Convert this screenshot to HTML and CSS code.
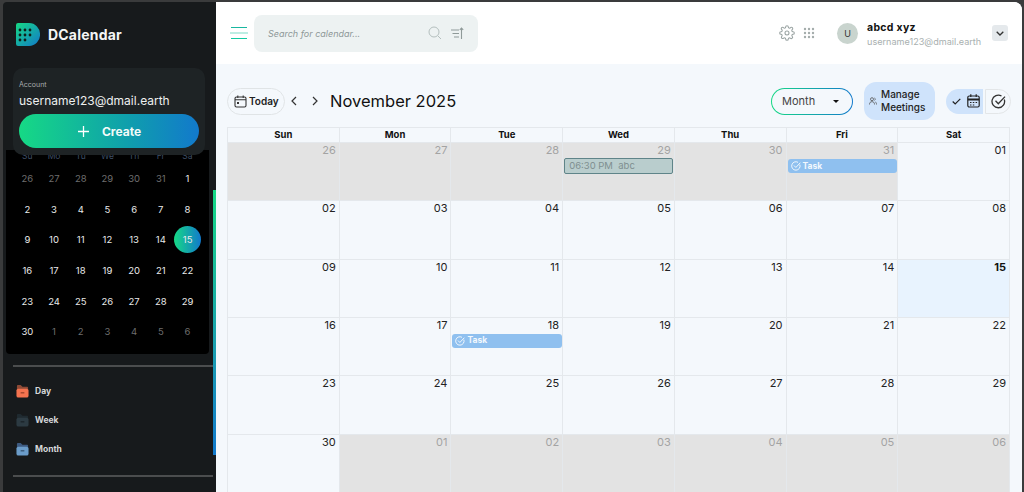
FILE: index.html
```html
<!DOCTYPE html>
<html lang="en">
<head>
<meta charset="utf-8">
<title>DCalendar</title>
<link rel="stylesheet" href="styles.css">
</head>
<body>
<div class="app">
  <aside class="sidebar">
    <div class="brand">
      <svg class="logo" width="24" height="23" viewBox="0 0 24 23">
        <defs><linearGradient id="lg" x1="0" y1="0" x2="1" y2="1"><stop offset="0" stop-color="#16d985"/><stop offset="1" stop-color="#1279c9"/></linearGradient></defs>
        <path d="M0 2a2 2 0 0 1 2-2h11a11 11 0 0 1 11 11.500a11 11 0 0 1-11 11.500H2a2 2 0 0 1-2-2z" fill="url(#lg)"/>
        <g fill="#10201c"><circle cx="4" cy="7" r="1.400"/><circle cx="9" cy="7" r="1.400"/><circle cx="14" cy="7" r="1.400"/><circle cx="4" cy="12" r="1.400"/><circle cx="9" cy="12" r="1.400"/><circle cx="14" cy="12" r="1.400"/><circle cx="4" cy="17" r="1.400"/><circle cx="9" cy="17" r="1.400"/></g>
      </svg>
      <span class="brand-name">DCalendar</span>
    </div>
    <div class="account">
      <div class="account-label">Account</div>
      <div class="account-mail">username123@dmail.earth</div>
      <button class="create"><svg width="13" height="13" viewBox="0 0 13 13"><path d="M6.500 1v11M1 6.500h11" stroke="#fff" stroke-width="1.300"/></svg><span>Create</span></button>
    </div>
    <div class="mini">
      <div class="mini-head"><span>Su</span><span>Mo</span><span>Tu</span><span>We</span><span>Th</span><span>Fr</span><span>Sa</span></div>
      <div class="mini-grid">
        <span class="dim">26</span><span class="dim">27</span><span class="dim">28</span><span class="dim">29</span><span class="dim">30</span><span class="dim">31</span><span>1</span>
        <span>2</span><span>3</span><span>4</span><span>5</span><span>6</span><span>7</span><span>8</span>
        <span>9</span><span>10</span><span>11</span><span>12</span><span>13</span><span>14</span><span class="now">15</span>
        <span>16</span><span>17</span><span>18</span><span>19</span><span>20</span><span>21</span><span>22</span>
        <span>23</span><span>24</span><span>25</span><span>26</span><span>27</span><span>28</span><span>29</span>
        <span>30</span><span class="dim">1</span><span class="dim">2</span><span class="dim">3</span><span class="dim">4</span><span class="dim">5</span><span class="dim">6</span>
      </div>
    </div>
    <nav class="views">
      <div class="view"><svg width="13" height="14" viewBox="0 0 14 15"><path d="M1 6V2a1 1 0 0 1 1-1h3l2 2h5a1 1 0 0 1 1 1v2z" fill="#8d4a36"/><rect x="0.500" y="5" width="13" height="9.500" rx="2" fill="#f4734f"/><rect x="5" y="9" width="4" height="1" fill="#7c2f1c"/></svg><span>Day</span></div>
      <div class="view"><svg width="13" height="14" viewBox="0 0 14 15"><path d="M1 6V2a1 1 0 0 1 1-1h3l2 2h5a1 1 0 0 1 1 1v2z" fill="#1f2a30"/><rect x="0.500" y="5" width="13" height="9.500" rx="2" fill="#2c3a42"/><rect x="5" y="9" width="4" height="1" fill="#151b1f"/></svg><span>Week</span></div>
      <div class="view"><svg width="13" height="14" viewBox="0 0 14 15"><path d="M1 6V2a1 1 0 0 1 1-1h3l2 2h5a1 1 0 0 1 1 1v2z" fill="#3d5a80"/><rect x="0.500" y="5" width="13" height="9.500" rx="2" fill="#6b9cc9"/><rect x="5" y="9" width="4" height="1" fill="#22384f"/></svg><span>Month</span></div>
    </nav>
    <div class="thumb"></div>
  </aside>
  <main class="main">
    <header class="topbar">
      <svg class="menu" width="18" height="15" viewBox="0 0 18 15"><g stroke-width="1.200"><path d="M1 1.500h16" stroke="#19b7a0"/><path d="M0 7h18" stroke="#7fdcc8"/><path d="M1 12.500h16" stroke="#12c9a0"/></g></svg>
      <div class="search">
        <span class="search-text">Search for calendar...</span>
        <svg width="14" height="14" viewBox="0 0 14 14" fill="none" stroke="#b4bfbe" stroke-width="1"><circle cx="6" cy="6" r="5"/><path d="M10 10l3 3"/></svg>
        <svg width="13" height="13" viewBox="0 0 13 13" fill="none" stroke="#8f9a99" stroke-width="1.100"><path d="M0 3h8M1.500 6.500h6.500M3 10h5M10.500 12V1M8.800 2.800l1.700-1.800 1.700 1.800"/></svg>
      </div>
      <div class="spacer"></div>
      <svg class="gear" width="16" height="16" viewBox="0 0 24 24" fill="none" stroke="#9aa4a3" stroke-width="1.600" stroke-linejoin="round"><circle cx="12" cy="12" r="3"/><path d="M19.400 15a1.700 1.700 0 0 0 .3 1.800l.1.100a2 2 0 1 1-2.900 2.900l-.1-.1a1.700 1.700 0 0 0-2.800 1.200V21a2 2 0 1 1-4 0v-.1a1.700 1.700 0 0 0-2.900-1.200l-.1.100a2 2 0 1 1-2.800-2.900l.1-.1a1.700 1.700 0 0 0-1.200-2.800H3a2 2 0 1 1 0-4h.1a1.700 1.700 0 0 0 1.200-2.900l-.1-.1A2 2 0 1 1 7 4.200l.1.100a1.700 1.700 0 0 0 1.800.3H9a1.700 1.700 0 0 0 1-1.500V3a2 2 0 1 1 4 0v.1a1.700 1.700 0 0 0 2.900 1.200l.1-.1a2 2 0 1 1 2.800 2.800l-.1.100a1.700 1.700 0 0 0 1.200 2.900H21a2 2 0 1 1 0 4h-.1a1.700 1.700 0 0 0-1.500 1z"/></svg>
      <svg class="apps" width="12" height="12" viewBox="0 0 12 12" fill="#a4adac"><circle cx="2" cy="2" r="1.200"/><circle cx="6" cy="2" r="1.200"/><circle cx="10" cy="2" r="1.200"/><circle cx="2" cy="6" r="1.200"/><circle cx="6" cy="6" r="1.200"/><circle cx="10" cy="6" r="1.200"/><circle cx="2" cy="10" r="1.200"/><circle cx="6" cy="10" r="1.200"/><circle cx="10" cy="10" r="1.200"/></svg>
      <div class="avatar">U</div>
      <div class="user">
        <div class="user-name">abcd xyz</div>
        <div class="user-mail">username123@dmail.earth</div>
      </div>
      <div class="user-more"><svg width="8" height="5" viewBox="0 0 8 5" fill="none" stroke="#333" stroke-width="1.300"><path d="M.7.700L4 4 7.300.700"/></svg></div>
    </header>
    <section class="content">
      <div class="toolbar">
        <button class="today">
          <svg width="13" height="13" viewBox="0 0 13 13" fill="none" stroke="#333" stroke-width="1.100"><rect x="1" y="2" width="11" height="10" rx="1.500"/><path d="M1 4.800h11M3.800.500v2.500M9.200.500v2.500"/><rect x="3" y="7" width="2" height="2" fill="#333" stroke="none"/></svg>
          <span>Today</span>
        </button>
        <svg class="nav-first" width="6" height="10" viewBox="0 0 6 10" fill="none" stroke="#333" stroke-width="1.200"><path d="M5 1L1 5l4 4"/></svg>
        <svg class="nav-next" width="6" height="10" viewBox="0 0 6 10" fill="none" stroke="#333" stroke-width="1.200"><path d="M1 1l4 4-4 4"/></svg>
        <h1 class="title">November 2025</h1>
        <div class="spacer"></div>
        <div class="month-ring"><div class="month-select"><span>Month</span><i class="caret"></i></div></div>
        <button class="manage">
          <svg width="8" height="8" viewBox="0 0 8 8" fill="none" stroke="#555" stroke-width=".8"><circle cx="3" cy="2.200" r="1.500"/><path d="M.5 7.500c0-2 1-2.800 2.500-2.800s2.500.8 2.500 2.800M5.500 1c1 .3 1 2 0 2.400M6.300 4.900c.8.400 1.200 1.200 1.200 2.600"/></svg>
          <span>Manage<br>Meetings</span>
        </button>
        <div class="toggle">
          <div class="toggle-on">
            <svg width="9" height="7" viewBox="0 0 9 7" fill="none" stroke="#222" stroke-width="1.200"><path d="M.7 3.500L3.200 6 8.300.8"/></svg>
            <svg width="13" height="14" viewBox="0 0 13 14" fill="none" stroke="#222" stroke-width="1.200"><rect x=".8" y="2" width="11.400" height="11" rx="1.500"/><path d="M.8 5.500h11.400" stroke-width="2"/><path d="M3.800.3V3M9.200.3V3"/><path d="M3 8.500h1.500M5.800 8.500h1.500M8.600 8.500h1.500M3 11h1.500M5.800 11h1.500" stroke-width="1"/></svg>
          </div>
          <div class="toggle-off"><svg width="15" height="15" viewBox="0 0 15 15" fill="none" stroke="#333" stroke-width="1.300"><path d="M13.300 5.500A6.300 6.300 0 1 1 10.500 2"/><path d="M4.500 6.800l2.800 2.900L14 2.600"/></svg></div>
        </div>
      </div>
      <div class="calendar">
        <div class="dow">Sun</div><div class="dow">Mon</div><div class="dow">Tue</div><div class="dow">Wed</div><div class="dow">Thu</div><div class="dow">Fri</div><div class="dow">Sat</div>

        <div class="day off">26</div><div class="day off">27</div><div class="day off">28</div>
        <div class="day off">29<div class="event">06:30 PM&nbsp; abc</div></div>
        <div class="day off">30</div>
        <div class="day off">31<div class="task"><svg width="10" height="10" viewBox="0 0 15 15" fill="none" stroke="#fff" stroke-width="1.300"><path d="M13.300 5.500A6.300 6.300 0 1 1 10.500 2"/><path d="M4.500 6.800l2.800 2.900L14 2.600"/></svg><span>Task</span></div></div>
        <div class="day">01</div>

        <div class="day">02</div><div class="day">03</div><div class="day">04</div><div class="day">05</div><div class="day">06</div><div class="day">07</div><div class="day">08</div>

        <div class="day">09</div><div class="day">10</div><div class="day">11</div><div class="day">12</div><div class="day">13</div><div class="day">14</div><div class="day today-cell">15</div>

        <div class="day">16</div><div class="day">17</div>
        <div class="day">18<div class="task"><svg width="10" height="10" viewBox="0 0 15 15" fill="none" stroke="#fff" stroke-width="1.300"><path d="M13.300 5.500A6.300 6.300 0 1 1 10.500 2"/><path d="M4.500 6.800l2.800 2.900L14 2.600"/></svg><span>Task</span></div></div>
        <div class="day">19</div><div class="day">20</div><div class="day">21</div><div class="day">22</div>

        <div class="day">23</div><div class="day">24</div><div class="day">25</div><div class="day">26</div><div class="day">27</div><div class="day">28</div><div class="day">29</div>

        <div class="day">30</div><div class="day off">01</div><div class="day off">02</div><div class="day off">03</div><div class="day off">04</div><div class="day off">05</div><div class="day off">06</div>
      </div>
    </section>
  </main>
</div>
</body>
</html>
```

FILE: styles.css
```css
* { box-sizing: border-box; }
html, body { margin: 0; height: 100%; overflow: hidden; }
body {
  background: #3a3b3c;
  font-family: "Inter", "Liberation Sans", sans-serif;
  padding: 2px 2px 0 3px;
}
button { font-family: inherit; border: 0; padding: 0; cursor: pointer; }
.app {
  display: flex;
  height: 490px;
  overflow: hidden;
  border-top-right-radius: 8px;
  border-top-left-radius: 4px;
}
.spacer { flex: 1; }

/* sidebar */
.sidebar {
  position: relative;
  width: 213px;
  flex: none;
  background: #171a1c;
  padding: 0 0 0 3px;
}
.brand { display: flex; align-items: center; gap: 8px; height: 66px; padding: 0 0 2px 10px; }
.logo { flex: none; }
.brand-name { color: #f4f5f5; font-size: 14px; font-weight: 700; letter-spacing: .2px; }
.account {
  position: relative;
  z-index: 2;
  width: 192px;
  height: 87px;
  margin-left: 7px;
  padding: 11px 6px 0;
  background: #1e2325;
  border-radius: 10px;
}
.account-label { color: #a8acad; font-size: 7px; line-height: 12px; }
.account-mail { color: #eef0f0; font-size: 12px; line-height: 17px; margin-top: 1px; white-space: nowrap; }
.create {
  display: flex;
  align-items: center;
  justify-content: center;
  gap: 12px;
  width: 180px;
  height: 34px;
  margin-top: 5px;
  border-radius: 18px;
  background: linear-gradient(90deg, #16d985 0%, #0f9fac 60%, #1279cc 100%);
  color: #f2fbf8;
  font-size: 12px;
  font-weight: 700;
}
.mini {
  width: 203px;
  height: 204px;
  margin-top: -5px;
  background: #000;
  border-radius: 0 0 4px 4px;
  padding: 0 8px 0 8px;
}
.mini-head {
  display: grid;
  grid-template-columns: repeat(7, 26.700px);
  height: 11px;
  color: #3f4f66;
  font-size: 8.500px;
  line-height: 12px;
  text-align: center;
}
.mini-grid {
  display: grid;
  grid-template-columns: repeat(7, 26.700px);
  grid-auto-rows: 30.700px;
  margin-top: 2px;
  color: #e9eaea;
  font-size: 9.500px;
  font-weight: 400;
  text-align: center;
}
.mini-grid span { display: flex; align-items: center; justify-content: center; }
.mini-grid .dim { color: #6e6e6e; }
.mini-grid .now {
  width: 27px;
  height: 27px;
  margin: 1.500px 0 0 0;
  border-radius: 50%;
  background: linear-gradient(90deg, #16d985, #1279cc);
}
.views {
  width: 200px;
  height: 112px;
  margin: 11px 0 0 7px;
  padding-top: 16px;
  border-top: 2px solid #4b4d4e;
  border-bottom: 2px solid #4b4d4e;
  display: flex;
  flex-direction: column;
  gap: 13.500px;
}
.view {
  display: flex;
  align-items: center;
  gap: 6px;
  height: 15.500px;
  padding-left: 3px;
  color: #d5d7d8;
  font-size: 8.500px;
  font-weight: 700;
}
.thumb {
  position: absolute;
  right: 0;
  top: 188px;
  width: 3px;
  height: 265px;
  background: linear-gradient(180deg, #16d985, #1a9fb0 60%, #1279cc);
}

/* main */
.main { flex: 1; min-width: 0; background: #f4f8fc; display: flex; flex-direction: column; }
.topbar {
  display: flex;
  align-items: center;
  height: 62px;
  flex: none;
  background: #fff;
  padding: 0 14px 0 14px;
}
.menu { flex: none; }
.search {
  display: flex;
  align-items: center;
  width: 224px;
  height: 37px;
  margin-left: 6px;
  padding: 0 14px;
  background: #edf2f2;
  border-radius: 8px;
}
.search-text { flex: 1; color: #8d9898; font-size: 9px; font-style: italic; }
.search svg + svg { margin-left: 9px; }
.gear { flex: none; }
.apps { flex: none; margin-left: 8px; }
.avatar {
  display: flex;
  align-items: center;
  justify-content: center;
  width: 21px;
  height: 21px;
  margin-left: 22px;
  border-radius: 50%;
  background: #c9d4ce;
  color: #333;
  font-size: 9px;
}
.user { margin-left: 9px; width: 124px; }
.user-name { color: #111; font-size: 10.500px; font-weight: 700; line-height: 14px; letter-spacing: .3px; margin-top: 2px; }
.user-mail { color: #a9b0b0; font-size: 9.100px; line-height: 12px; margin-top: 1px; white-space: nowrap; }
.user-more {
  display: flex;
  align-items: center;
  justify-content: center;
  width: 16px;
  height: 16px;
  margin: 0 0 0 1px;
  background: #e5e9ec;
  border-radius: 3px;
}
.content { flex: 1; min-height: 0; padding: 0 11px 0 11px; overflow: hidden; }
.toolbar { display: flex; align-items: center; height: 63px; padding-top: 11px; }
.today {
  display: flex;
  align-items: center;
  gap: 2px;
  width: 58px;
  height: 27px;
  padding-left: 6px;
  border: 1px solid #e0e4e6;
  border-radius: 14px;
  background: transparent;
  color: #222;
  font-size: 10px;
  font-weight: 600;
}
.nav-first { margin-left: 6px; }
.nav-next { margin-left: 15px; }
.title { margin: 0 0 0 12px; color: #111; font-size: 16.500px; font-weight: 400; line-height: 20px; }
.month-ring {
  width: 82px;
  height: 27px;
  padding: 1px;
  border-radius: 14px;
  background: linear-gradient(90deg, #16d985, #1279cc);
}
.month-select {
  display: flex;
  align-items: center;
  justify-content: space-between;
  height: 25px;
  padding: 0 13px 0 10px;
  background: #f4f8fc;
  border-radius: 13px;
  color: #444;
  font-size: 11px;
}
.caret { width: 0; height: 0; border: 3px solid transparent; border-top: 3px solid #111; border-bottom: 0; }
.manage {
  display: flex;
  align-items: center;
  gap: 4px;
  width: 71px;
  height: 38px;
  margin-left: 11px;
  padding-left: 5px;
  background: #cfe3fb;
  border-radius: 12px;
  color: #222;
  font-size: 10px;
  font-weight: 500;
  line-height: 13px;
  text-align: left;
}
.toggle { display: flex; margin-left: 11px; }
.toggle-on {
  display: flex;
  align-items: center;
  gap: 6px;
  width: 37px;
  height: 25px;
  padding-left: 6px;
  background: #cfe3fb;
  border-radius: 13px 0 0 13px;
}
.toggle-off {
  display: flex;
  align-items: center;
  justify-content: center;
  width: 26px;
  height: 25px;
  margin-left: 2px;
  border: 1px solid #e3e6e8;
  border-radius: 0 13px 13px 0;
}
.calendar {
  display: grid;
  grid-template-columns: repeat(7, minmax(0, 1fr));
  grid-template-rows: 15px repeat(6, 58.330px);
  width: 783px;
  border-left: 1px solid #e4e8ec;
  border-top: 1px solid #e4e8ec;
}
.dow {
  border-right: 1px solid #e4e8ec;
  border-bottom: 1px solid #e4e8ec;
  color: #111;
  font-size: 9.500px;
  font-weight: 700;
  line-height: 14px;
  text-align: center;
}
.day {
  position: relative;
  min-width: 0;
  padding: 1px 3px 0 0;
  border-right: 1px solid #e4e8ec;
  border-bottom: 1px solid #e4e8ec;
  color: #222;
  font-size: 11px;
  line-height: 13px;
  text-align: right;
}
.off { background: #e3e3e3; color: #a3a3a3; }
.today-cell { background: #e8f3fe; font-weight: 700; color: #111; }
.event {
  height: 16px;
  margin: 1px -2px 0 1px;
  padding-left: 4px;
  background: #b9cdcd;
  border: 1px solid #5f8489;
  border-radius: 2px;
  color: #7f8f90;
  font-size: 9.500px;
  line-height: 14px;
  text-align: left;
  white-space: nowrap;
}
.task {
  display: flex;
  align-items: center;
  gap: 2px;
  height: 14px;
  margin: 2px -3px 0 1px;
  padding-left: 3px;
  background: #8fc0ef;
  border-radius: 3px;
  color: #f3f8fd;
  font-size: 8.500px;
  font-weight: 700;
  text-align: left;
}
```
